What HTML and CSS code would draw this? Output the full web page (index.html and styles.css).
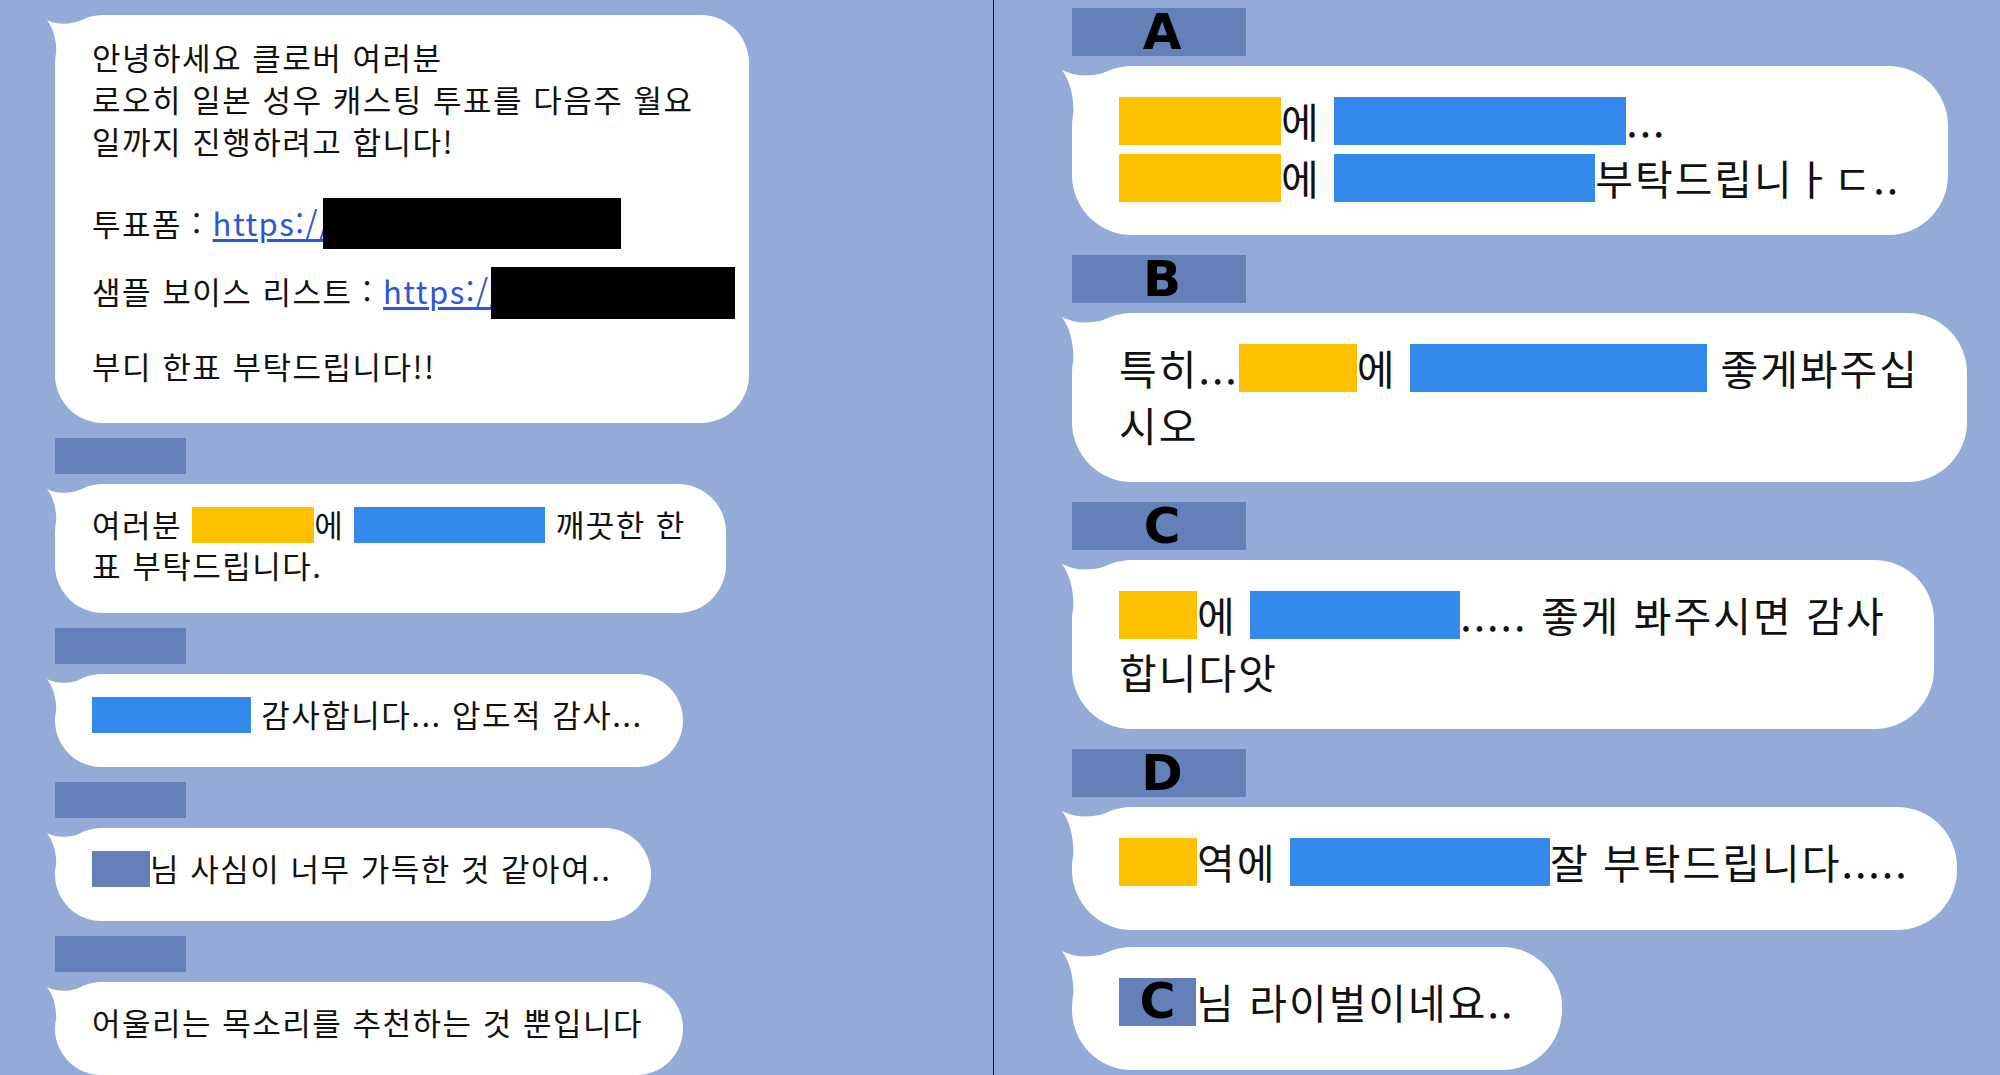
FILE: index.html
```html
<!DOCTYPE html>
<html lang="ko">
<head>
  <meta charset="UTF-8">
  <title>캐스팅 투표</title>
  <link rel="stylesheet" href="styles.css">
</head>
<body>

  <div class="board">

    <section class="chat chat-left">
      <div class="bubble notice">
        <p>안녕하세요 클로버 여러분<br>로오히 일본 성우 캐스팅 투표를 다음주 월요<br>일까지 진행하려고 합니다!</p>
        <p class="notice-link">투표폼 : <a class="link" href="#">https://</a><span class="redact redact-form"></span></p>
        <p class="notice-link">샘플 보이스 리스트 : <a class="link" href="#">https://</a><span class="redact redact-list"></span></p>
        <p class="notice-end">부디 한표 부탁드립니다!!</p>
      </div>

      <div class="msg">
        <div class="name"></div>
        <div class="bubble">여러분 <span class="mask role w122"></span>에 <span class="mask cast w191"></span> 깨끗한 한<br>표 부탁드립니다.</div>
      </div>

      <div class="msg">
        <div class="name"></div>
        <div class="bubble"><span class="mask cast w159"></span> 감사합니다... 압도적 감사...</div>
      </div>

      <div class="msg">
        <div class="name"></div>
        <div class="bubble"><span class="mask user w58"></span>님 사심이 너무 가득한 것 같아여..</div>
      </div>

      <div class="msg">
        <div class="name"></div>
        <div class="bubble">어울리는 목소리를 추천하는 것 뿐입니다</div>
      </div>
    </section>

    <section class="chat chat-right">
      <div class="msg">
        <div class="name">A</div>
        <div class="bubble"><span class="mask role w162"></span>에 <span class="mask cast w292"></span>...<br><span class="mask role w162"></span>에 <span class="mask cast w261"></span>부탁드립니ㅏㄷ..</div>
      </div>

      <div class="msg">
        <div class="name">B</div>
        <div class="bubble">특히...<span class="mask role w118"></span>에 <span class="mask cast w297"></span> 좋게봐주십<br>시오</div>
      </div>

      <div class="msg">
        <div class="name">C</div>
        <div class="bubble"><span class="mask role w78"></span>에 <span class="mask cast w210"></span>..... 좋게 봐주시면 감사<br>합니다앗</div>
      </div>

      <div class="msg">
        <div class="name">D</div>
        <div class="bubble"><span class="mask role w78"></span>역에 <span class="mask cast w260"></span>잘 부탁드립니다.....</div>
      </div>

      <div class="bubble reply"><span class="mask user w77">C</span>님 라이벌이네요..</div>
    </section>

  </div>

</body>
</html>
```

FILE: styles.css
```css
body {
  margin: 0;
  background: #93abd6;
  font-family: "Noto Sans CJK KR", "Noto Sans", sans-serif;
  color: #111;
}

.board {
  display: flex;
  height: 1075px;
  overflow: hidden;
}

.chat {
  display: flex;
  flex-direction: column;
  align-items: flex-start;
}

.chat-left {
  width: 994px;
  box-sizing: border-box;
  border-right: 1px solid #111;
  padding: 15px 0 0 55px;
}

.chat-right {
  flex: 1;
  padding: 8px 0 0 78px;
}

.msg {
  display: flex;
  flex-direction: column;
  align-items: flex-start;
  gap: 10px;
  margin-top: 15px;
}

.name {
  width: 131px;
  height: 36px;
  background: #6380b8;
}

/* speech bubbles */
.bubble {
  position: relative;
  box-sizing: border-box;
  min-height: 93px;
  padding: 19px 40px 28px 37px;
  background: #fff;
  border-radius: 48px;
  font-size: 31px;
  line-height: 41px;
  letter-spacing: 1.5px;
  white-space: nowrap;
}

.bubble::before {
  content: "";
  position: absolute;
  left: -10px;
  top: 0;
  width: 50px;
  height: 40px;
  background: #fff;
  clip-path: path("M 2 5 Q 20 14 44 2 L 44 38 L 11.5 38 Q 11 16 2 5 Z");
}

.notice {
  width: 694px;
  padding-top: 21px;
  padding-bottom: 38px;
  line-height: 42px;
}

.notice p {
  margin: 0;
}

.notice-link {
  margin-top: 40px !important;
}

.notice-link + .notice-link {
  margin-top: 26px !important;
}

.notice-end {
  margin-top: 33px !important;
}

.link {
  color: #2b57d8;
  text-decoration: underline;
  text-underline-offset: 3px;
}

.redact {
  display: inline-block;
  vertical-align: top;
  background: #000;
}

.redact-form {
  width: 298px;
  height: 51px;
  margin: -4px 0 -9px -10px;
}

.redact-list {
  width: 244px;
  height: 52px;
  margin: -3px 0 -10px -12px;
}

/* redaction boxes over names */
.mask {
  display: inline-block;
  vertical-align: top;
  height: 36px;
  margin-top: 4px;
}

.role { background: #ffc000; }
.cast { background: #348aea; }
.user { background: #6380b8; }

.w58 { width: 58px; }
.w77 { width: 77px; }
.w78 { width: 78px; }
.w118 { width: 118px; }
.w122 { width: 122px; }
.w159 { width: 159px; }
.w162 { width: 162px; }
.w191 { width: 191px; }
.w210 { width: 210px; }
.w260 { width: 260px; }
.w261 { width: 261px; }
.w292 { width: 292px; }
.w297 { width: 297px; }

/* right side is a bigger capture */
.chat-right .msg {
  margin-top: 20px;
}

.chat-right .msg:first-child {
  margin-top: 0;
}

.chat-right .name {
  width: 174px;
  height: 48px;
  box-sizing: border-box;
  padding-left: 6px;
  font: 700 50px/48px "DejaVu Sans", sans-serif;
  color: #000;
  text-align: center;
}

.chat-right .bubble {
  min-height: 123px;
  padding: 26px 48px 29px 47px;
  border-radius: 60px;
  font-size: 41px;
  line-height: 57px;
  letter-spacing: 2px;
}

.chat-right .bubble::before {
  left: -12px;
  width: 60px;
  height: 48px;
  clip-path: path("M 2 4 Q 26 16 57 2 L 57 47 L 13.5 47 Q 13.5 20 2 4 Z");
}

.chat-right .mask {
  height: 48px;
  margin-top: 5px;
}

.chat-right .user {
  font: 700 49px/48px "DejaVu Sans", sans-serif;
  letter-spacing: 0;
  color: #000;
  text-align: center;
}

.reply {
  margin-top: 17px;
}
```
